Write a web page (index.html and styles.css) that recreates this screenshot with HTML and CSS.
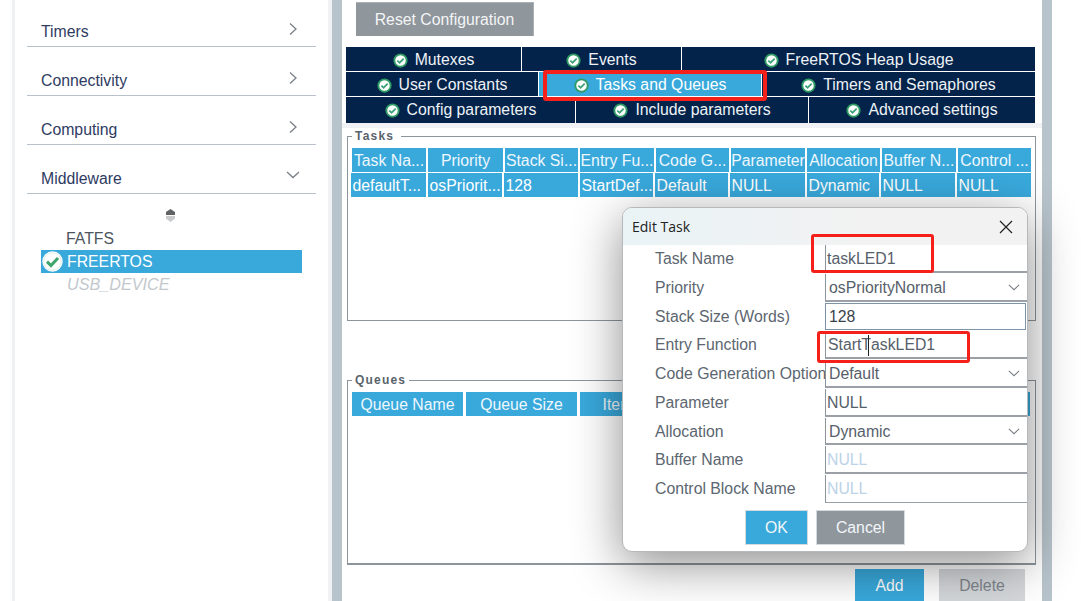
FILE: index.html
```html
<!DOCTYPE html>
<html lang="en">
<head>
<meta charset="utf-8">
<title>Edit Task</title>
<link rel="stylesheet" href="styles.css">
</head>
<body>
<svg class="defs" width="0" height="0" aria-hidden="true">
  <symbol id="ok" viewBox="0 0 16 16">
    <circle cx="8" cy="8" r="6.6" fill="#fff" stroke="#2f9a63" stroke-width="2"/>
    <path d="M4.6 8.2 7 10.4 11.4 6" fill="none" stroke="#3fa37a" stroke-width="1.9"/>
  </symbol>
  <symbol id="ok-big" viewBox="0 0 21 21">
    <circle cx="10.5" cy="10.5" r="10.2" fill="#fff"/>
    <circle cx="10.5" cy="10.5" r="8.8" fill="none" stroke="#dff0e8" stroke-width="1"/>
    <path d="M5 10.6 9 14.6 16 7" fill="none" stroke="#3ea56b" stroke-width="3"/>
  </symbol>
  <symbol id="chev-right" viewBox="0 0 10 14">
    <path d="M2 1.5 8 7 2 12.5" fill="none" stroke="#7b8087" stroke-width="1.3"/>
  </symbol>
  <symbol id="chev-down" viewBox="0 0 14 8">
    <path d="M1 1 7 6.5 13 1" fill="none" stroke="#7b8087" stroke-width="1.3"/>
  </symbol>
</svg>
<div class="page">
  <aside class="sidebar">
    <div class="cat cat-first"><span>Timers</span><svg class="cv-r"><use href="#chev-right"/></svg></div>
    <div class="cat"><span>Connectivity</span><svg class="cv-r"><use href="#chev-right"/></svg></div>
    <div class="cat"><span>Computing</span><svg class="cv-r"><use href="#chev-right"/></svg></div>
    <div class="cat"><span>Middleware</span><svg class="cv-d"><use href="#chev-down"/></svg></div>
    <div class="sorter">
      <svg width="11" height="13" viewBox="0 0 11 13"><path d="M5.5 0 10 3V6H1V3Z" fill="#5f6366"/><path d="M1 7H10V9.5L5.5 13 1 9.5Z" fill="#c8cacc"/></svg>
    </div>
    <ul class="mw-list">
      <li class="mw">FATFS</li>
      <li class="mw mw-on"><svg class="mw-ok"><use href="#ok-big"/></svg>FREERTOS</li>
      <li class="mw mw-off">USB_DEVICE</li>
    </ul>
  </aside>
  <main class="main">
    <button class="reset">Reset Configuration</button>
    <div class="tabs">
      <div class="tabrow tabrow-a">
        <div class="tab"><svg class="tick"><use href="#ok"/></svg>Mutexes</div>
        <div class="tab"><svg class="tick"><use href="#ok"/></svg>Events</div>
        <div class="tab"><svg class="tick"><use href="#ok"/></svg>FreeRTOS Heap Usage</div>
      </div>
      <div class="tabrow tabrow-b">
        <div class="tab"><svg class="tick"><use href="#ok"/></svg>User Constants</div>
        <div class="tab tab-on"><svg class="tick"><use href="#ok"/></svg>Tasks and Queues</div>
        <div class="tab"><svg class="tick"><use href="#ok"/></svg>Timers and Semaphores</div>
      </div>
      <div class="tabrow tabrow-c">
        <div class="tab"><svg class="tick"><use href="#ok"/></svg>Config parameters</div>
        <div class="tab"><svg class="tick"><use href="#ok"/></svg>Include parameters</div>
        <div class="tab"><svg class="tick"><use href="#ok"/></svg>Advanced settings</div>
      </div>
    </div>
    <section class="panel">
      <fieldset class="group group-tasks">
        <legend class="legend legend-wide">Tasks</legend>
        <div class="thead tasks-h">
          <div>Task Na...</div><div>Priority</div><div>Stack Si...</div><div>Entry Fu...</div><div>Code G...</div><div>Parameter</div><div>Allocation</div><div>Buffer N...</div><div>Control ...</div>
        </div>
        <div class="trow">
          <div>defaultT...</div><div>osPriorit...</div><div>128</div><div>StartDef...</div><div>Default</div><div>NULL</div><div>Dynamic</div><div>NULL</div><div>NULL</div>
        </div>
      </fieldset>
      <fieldset class="group group-queues">
        <legend class="legend">Queues</legend>
        <div class="thead queues-h">
          <div>Queue Name</div><div>Queue Size</div><div>Item Size</div><div></div><div></div><div></div>
        </div>
      </fieldset>
      <div class="actions">
        <button class="btn btn-add">Add</button>
        <button class="btn btn-del">Delete</button>
      </div>
    </section>
  </main>
</div>

<div class="mark mark-tab"></div>

<div class="dialog">
  <header class="dlg-title">
    <span>Edit Task</span>
    <svg width="14" height="14" viewBox="0 0 14 14"><path d="M1 1 13 13M13 1 1 13" stroke="#222" stroke-width="1.2" fill="none"/></svg>
  </header>
  <div class="form">
    <div class="lbl">Task Name</div><div class="fld fld-plain">taskLED1</div>
    <div class="lbl">Priority</div><div class="fld sel">osPriorityNormal<svg class="sel-cv"><use href="#chev-down"/></svg></div>
    <div class="lbl">Stack Size (Words)</div><div class="fld fld-focus">128</div>
    <div class="lbl">Entry Function</div><div class="fld">StartT<span class="caret"></span>askLED1</div>
    <div class="lbl">Code Generation Option</div><div class="fld sel">Default<svg class="sel-cv"><use href="#chev-down"/></svg></div>
    <div class="lbl">Parameter</div><div class="fld fld-plain">NULL</div>
    <div class="lbl">Allocation</div><div class="fld sel">Dynamic<svg class="sel-cv"><use href="#chev-down"/></svg></div>
    <div class="lbl">Buffer Name</div><div class="fld fld-off">NULL</div>
    <div class="lbl">Control Block Name</div><div class="fld fld-off fld-last">NULL</div>
  </div>
  <div class="dlg-btns">
    <button class="dbtn dbtn-ok">OK</button>
    <button class="dbtn dbtn-cancel">Cancel</button>
  </div>
</div>

<div class="mark mark-name"></div>
<div class="mark mark-entry"></div>
</body>
</html>
```
FILE: styles.css
```css
* { box-sizing: border-box; }
html, body { margin: 0; padding: 0; }
body {
  position: relative;
  width: 1081px;
  height: 601px;
  overflow: hidden;
  background: #fff;
  font: 15.8px/1.2 "Liberation Sans", Arial, sans-serif;
}
.defs { position: absolute; }
.page { display: flex; height: 601px; padding-left: 12px; }

/* sidebar */
.sidebar {
  width: 320px;
  flex: none;
  background: #fff;
  border-left: 3px solid #f0f1f3;
  border-right: 4px solid #f0f1f3;
  padding-left: 12px;
}
.cat {
  display: flex;
  justify-content: space-between;
  align-items: flex-start;
  width: 289px;
  height: 49px;
  padding: 25px 18px 0 14px;
  border-bottom: 1px solid #b9c2cc;
  color: #2e3b62;
  line-height: 18px;
}
.cat-first { height: 47px; padding-top: 23px; }
.cv-r { width: 10px; height: 14px; margin-top: -1px; }
.cv-d { width: 14px; height: 8px; margin: 1px -2px 0 0; }
.sorter { display: flex; justify-content: center; width: 287px; padding-top: 15px; height: 30px; }
.sorter svg { display: block; }
.mw-list { list-style: none; margin: 3px 0 0 14px; padding: 0; width: 261px; }
.mw { height: 23px; line-height: 23px; padding-left: 25px; color: #4c5560; position: relative; }
.mw-on { background: #39a9dc; color: #fff; padding-left: 26px; }
.mw-off { color: #c3c8cd; font-style: italic; font-size: 16.2px; padding-left: 26px; }
.mw-ok { position: absolute; left: 1px; top: 1px; width: 21px; height: 21px; }

/* main */
.main {
  width: 720px;
  flex: none;
  background: #fff;
  border-left: 10px solid #b8c4cc;
  border-right: 10px solid #b8c4cc;
  padding-top: 2px;
}
.reset {
  display: block;
  margin-left: 14px;
  width: 178px;
  height: 34px;
  border: 1px solid #aab0b5;
  border-width: 1px 1px 0 0;
  background: #8f969c;
  color: #f4f5f6;
  font: 15.8px "Liberation Sans", Arial, sans-serif;
  padding: 0;
}
.tabs { margin: 11px 7px 0 4px; display: flex; flex-direction: column; gap: 1px; }
.tabrow { display: grid; gap: 1px; height: 24px; }
.tabrow-a { grid-template-columns: 175px 159px 1fr; }
.tabrow-b { grid-template-columns: 192px 222px 1fr; }
.tabrow-c { grid-template-columns: 229px 232px 1fr; height: 26px; }
.tab {
  display: flex;
  align-items: center;
  justify-content: center;
  background: #03234b;
  color: #eef2f6;
  white-space: nowrap;
  padding-top: 2px;
}
.tabrow-c .tab { padding-top: 1px; }
.tab-on { background: #39a9dc; color: #fff; }
.tick { width: 15px; height: 15px; margin-right: 7px; flex: none; }

.panel {
  border-top: 5px solid #f0f2f5;
  padding: 2px 6px 0 5px;
  position: relative;
}
.group {
  margin: 0;
  border: 1px solid #8d959c;
  padding: 5px 4px 0;
  min-width: 0;
}
.group-tasks { height: 191px; }
.group-queues { height: 191px; margin-top: 53px; border-bottom-width: 2px; }
.legend {
  padding: 0 3px;
  font: bold 12px/13px "Liberation Sans", Arial, sans-serif;
  letter-spacing: 1.2px;
  color: #59636b;
}
.legend-wide { padding-right: 7px; }
.thead, .trow { display: grid; color: #fff; }
.thead { height: 24px; }
.thead > div, .trow > div {
  background: #39a9dc;
  margin-right: 2px;
  height: 24px;
  line-height: 26px;
  overflow: hidden;
  white-space: nowrap;
}
.thead > div { text-align: center; color: #eef7fc; }
.tasks-h { grid-template-columns: 76px 77px 75px 76px 75px 76px 75px 76px 75px; }
.trow {
  grid-template-columns: 77px 76px 76px 75px 75px 77px 74px 76px 76px;
  margin: 1px 0 0 -1px;
}
.trow > div { padding-left: 1.5px; }
.queues-h { grid-template-columns: 114px 114px 114px 114px 114px 111px; }
.queues-h > div { margin-right: 3px; }

.actions { display: flex; justify-content: flex-end; gap: 15px; padding: 4px 11px 0 0; }
.btn {
  height: 34px;
  border: 0;
  padding: 0;
  font: 15.8px "Liberation Sans", Arial, sans-serif;
}
.btn-add { width: 69px; background: #39a9dc; color: #fff; }
.btn-del { width: 86px; background: #d5d8db; color: #7f868c; }

/* dialog */
.dialog {
  position: absolute;
  left: 622px;
  top: 207px;
  width: 406px;
  height: 345px;
  background: #fff;
  border: 1px solid #b5b9bc;
  border-radius: 10px;
  box-shadow: 0 12px 50px rgba(0, 0, 0, .45);
  overflow: hidden;
}
.dlg-title {
  display: flex;
  align-items: center;
  justify-content: space-between;
  height: 37px;
  padding: 0 14px 0 9px;
  background: linear-gradient(90deg, #e9f3f6, #f2f2f2 60%);
  font: 14px "Open Sans", sans-serif;
  color: #222;
}
.form { display: grid; grid-template-columns: 202px 202px; grid-auto-rows: 28.75px; }
.lbl { padding-left: 32px; line-height: 28px; color: #5c6670; white-space: nowrap; }
.fld {
  position: relative;
  height: 27.75px;
  line-height: 28px;
  padding-left: 2px;
  color: #56606a;
  border-left: 1px solid #8d959c;
  border-bottom: 2px solid #9aa0a5;
  background: #fff;
}
.fld-plain { padding-left: 1px; }
.sel { padding-left: 3px; }
.sel-cv { position: absolute; right: 7px; top: 10px; width: 12px; height: 7px; }
.fld-focus { padding-left: 3px; color: #3a434c; border: 1px solid #7d93a8; margin-right: 1px; line-height: 26px; }
.fld-off { padding-left: 1px; color: #bcd2e6; }
.fld-last { border-bottom-width: 1px; }
.caret { display: inline-block; width: 1px; height: 21px; background: #222; margin: 0 2px 0 -3px; vertical-align: -6px; }
.dlg-btns { display: flex; justify-content: center; gap: 8px; padding-top: 6px; }
.dbtn { height: 35px; border: 1px solid #d3dbe0; padding: 1px 0 0; font: 15.8px "Liberation Sans", Arial, sans-serif; color: #f2f6f9; }
.dbtn-ok { width: 63px; background: #39a9dc; }
.dbtn-cancel { width: 89px; background: #8f969c; }

/* hand-drawn red annotations */
.mark { position: absolute; border: 4px solid #f5201a; border-radius: 3px; pointer-events: none; }
.mark-tab { left: 543px; top: 70px; width: 224px; height: 31px; }
.mark-name { left: 811px; top: 234px; width: 123px; height: 39px; border-width: 3.5px; }
.mark-entry { left: 817px; top: 331px; width: 153px; height: 32px; border-width: 3.5px; }
```
